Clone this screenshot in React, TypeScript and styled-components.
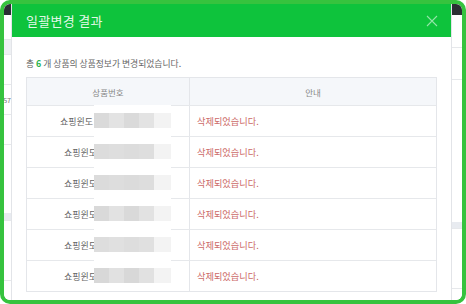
import React from "react";
import styled, { createGlobalStyle } from "styled-components";

const Global = createGlobalStyle`
  html, body { margin: 0; padding: 0; background: #ffffff; }
  body { font-family: "Noto Sans CJK KR", "Noto Sans", sans-serif; }
  * { box-sizing: border-box; }
`;

const Frame = styled.div`
  width: 466px;
  height: 304px;
  border: 4px solid #36c33e;
  border-radius: 10px;
  overflow: hidden;
  display: flex;
  background: #ffffff;
`;

const Strip = styled.div<{ $w: number; $side: "left" | "right" }>`
  width: ${(p) => p.$w}px;
  flex: none;
  display: flex;
  flex-direction: column;
  background: #ffffff;
  ${(p) => (p.$side === "left" ? "border-right: 1px solid #e2e4e8;" : "border-left: 1px solid #e2e4e8;")}
  overflow: hidden;
`;

const StripTop = styled.div`
  height: 11px;
  background: #2b2e33;
  flex: none;
`;

const StripCell = styled.div<{ $h: number; $tone?: string; $line?: boolean }>`
  height: ${(p) => p.$h}px;
  flex: none;
  background: ${(p) => p.$tone || "transparent"};
  border-bottom: ${(p) => (p.$line ? "1px solid #e6e8eb" : "none")};
  font-size: 7px;
  color: #777;
  display: flex;
  align-items: center;
  justify-content: flex-end;
  white-space: nowrap;
`;

const Modal = styled.div`
  flex: 1;
  display: flex;
  flex-direction: column;
  background: #ffffff;
`;

const Header = styled.div`
  height: 33px;
  flex: none;
  background: #0ec33c;
  display: flex;
  align-items: center;
  justify-content: space-between;
  padding: 0 13px 0 14px;
`;

const Title = styled.h1`
  margin: 0;
  font-size: 13px;
  font-weight: 400;
  color: rgba(255, 255, 255, 0.9);
  letter-spacing: 0.3px;
`;

const Close = styled.button`
  border: 0;
  background: transparent;
  padding: 0;
  width: 12px;
  height: 12px;
  display: flex;
`;

const Body = styled.div`
  padding: 21px 14px 0 14px;
  display: flex;
  flex-direction: column;
`;

const Summary = styled.p`
  margin: 0 0 7px 0;
  font-size: 8.8px;
  line-height: 12px;
  color: #666;
`;

const Count = styled.b`
  color: #27b24c;
  font-weight: 700;
`;

const Table = styled.div`
  border: 1px solid #e4e6ea;
  display: flex;
  flex-direction: column;
`;

const Row = styled.div<{ $head?: boolean }>`
  display: grid;
  grid-template-columns: 163px 1fr;
  height: ${(p) => (p.$head ? 27 : 31)}px;
  background: ${(p) => (p.$head ? "#f5f7fa" : "#fff")};
  border-top: ${(p) => (p.$head ? "none" : "1px solid #e6e8eb")};
`;

const HeadCell = styled.div<{ $divider?: boolean }>`
  display: flex;
  align-items: center;
  justify-content: center;
  font-size: 8.5px;
  color: #888;
  border-right: ${(p) => (p.$divider ? "1px solid #e4e6ea" : "none")};
`;

const IdCell = styled.div<{ $pad: number }>`
  display: flex;
  align-items: center;
  padding-left: ${(p) => p.$pad}px;
  border-right: 1px solid #e4e6ea;
  font-size: 9px;
  color: #666;
`;

const Clip = styled.span<{ $w: number }>`
  width: ${(p) => p.$w}px;
  overflow: hidden;
  white-space: nowrap;
  flex: none;
`;

const Blur = styled.div`
  width: 77px;
  flex: none;
  align-self: stretch;
  margin-top: -1px;
  background: #ffffff;
  display: flex;
  align-items: center;
`;

const Mosaic = styled.div<{ $a: string; $b: string }>`
  width: 77px;
  height: 15px;
  background: linear-gradient(
    90deg,
    ${(p) => p.$a} 0 15px,
    ${(p) => p.$b} 15px 30px,
    ${(p) => p.$a} 30px 45px,
    ${(p) => p.$b} 45px 60px,
    #f3f3f3 60px 77px
  );
`;

const NoteCell = styled.div`
  display: flex;
  align-items: center;
  padding-left: 7px;
  font-size: 9.2px;
  color: #cc6a68;
`;

const rows = [
  { pad: 33, clip: 34, a: "#dadada", b: "#e3e3e3" },
  { pad: 37, clip: 30, a: "#dcdcdc", b: "#dedede" },
  { pad: 37, clip: 30, a: "#dbdbdb", b: "#dddddd" },
  { pad: 37, clip: 30, a: "#d9d9d9", b: "#e2e2e2" },
  { pad: 37, clip: 30, a: "#dddddd", b: "#e0e0e0" },
  { pad: 37, clip: 30, a: "#d8d8d8", b: "#e1e1e1" },
];

export default function App() {
  return (
    <>
      <Global />
      <Frame>
        <Strip $w={8} $side="left">
          <StripTop />
          <StripCell $h={25} $line />
          <StripCell $h={15} $tone="#eef0f3" $line />
          <StripCell $h={30} $line />
          <StripCell $h={30} $line>57</StripCell>
          <StripCell $h={30} $line />
          <StripCell $h={30} />
          <StripCell $h={38} />
          <StripCell $h={8} $tone="#e8ebf0" $line />
          <StripCell $h={60} $line />
        </Strip>
        <Modal>
          <Header>
            <Title>일괄변경 결과</Title>
            <Close aria-label="닫기">
              <svg width="12" height="12" viewBox="0 0 12 12">
                <path d="M1 1L11 11M11 1L1 11" stroke="rgba(255,255,255,0.55)" strokeWidth="1.1" />
              </svg>
            </Close>
          </Header>
          <Body>
            <Summary>
              총 <Count>6</Count> 개 상품의 상품정보가 변경되었습니다.
            </Summary>
            <Table>
              <Row $head>
                <HeadCell $divider>상품번호</HeadCell>
                <HeadCell>안내</HeadCell>
              </Row>
              {rows.map((r, i) => (
                <Row key={i}>
                  <IdCell $pad={r.pad}>
                    <Clip $w={r.clip}>쇼핑윈도</Clip>
                    <Blur>
                      <Mosaic $a={r.a} $b={r.b} />
                    </Blur>
                  </IdCell>
                  <NoteCell>삭제되었습니다.</NoteCell>
                </Row>
              ))}
            </Table>
          </Body>
        </Modal>
        <Strip $w={11} $side="right">
          <StripTop />
          <StripCell $h={33} $line />
          <StripCell $h={32} $line />
          <StripCell $h={142} />
          <StripCell $h={7} $tone="#e8ebf0" $line />
          <StripCell $h={60} $line />
        </Strip>
      </Frame>
    </>
  );
}
